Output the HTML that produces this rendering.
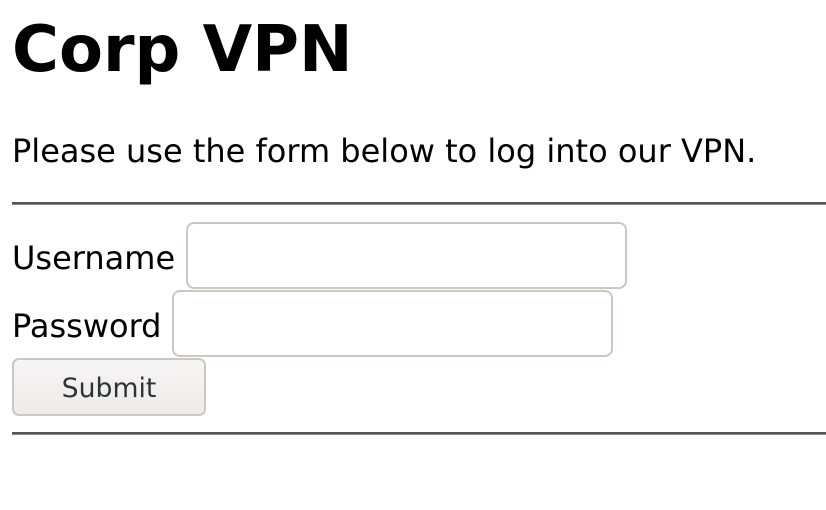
<!DOCTYPE html>
<html><head><meta charset="utf-8"><style>
html,body{margin:0;padding:0;width:826px;height:510px;overflow:hidden;background:#fff;}
body{font-family:"DejaVu Sans","Liberation Sans",sans-serif;color:#000;position:relative;}
.a{position:absolute;white-space:nowrap;line-height:1;}
h1{margin:0;font-size:64px;font-weight:bold;}
.t{font-size:32px;}
.hr{position:absolute;left:12px;width:830px;height:3px;background:linear-gradient(#555 0,#555 2px,#888 2px);}
.in{position:absolute;box-sizing:border-box;border:2px solid #cdc7c2;border-radius:8px;background:#fff;width:441px;height:67px;}
.btn{position:absolute;left:12px;top:358px;width:194px;height:58px;box-sizing:border-box;border:2px solid #cdc7c2;border-radius:7px;background:linear-gradient(#f7f6f5,#edebe9);font-size:26.7px;color:#2e3436;text-align:center;line-height:57px;}
</style></head><body>
<h1 class="a" style="left:12px;top:18px;">Corp VPN</h1>
<div class="a t" style="left:12px;top:135px;">Please use the form below to log into our VPN.</div>
<div class="hr" style="top:202px;"></div>
<div class="a t" style="left:12px;top:242px;">Username</div>
<div class="in" style="left:186px;top:222px;"></div>
<div class="a t" style="left:12px;top:310px;">Password</div>
<div class="in" style="left:172px;top:290px;"></div>
<div class="btn">Submit</div>
<div class="hr" style="top:432px;"></div>
</body></html>
